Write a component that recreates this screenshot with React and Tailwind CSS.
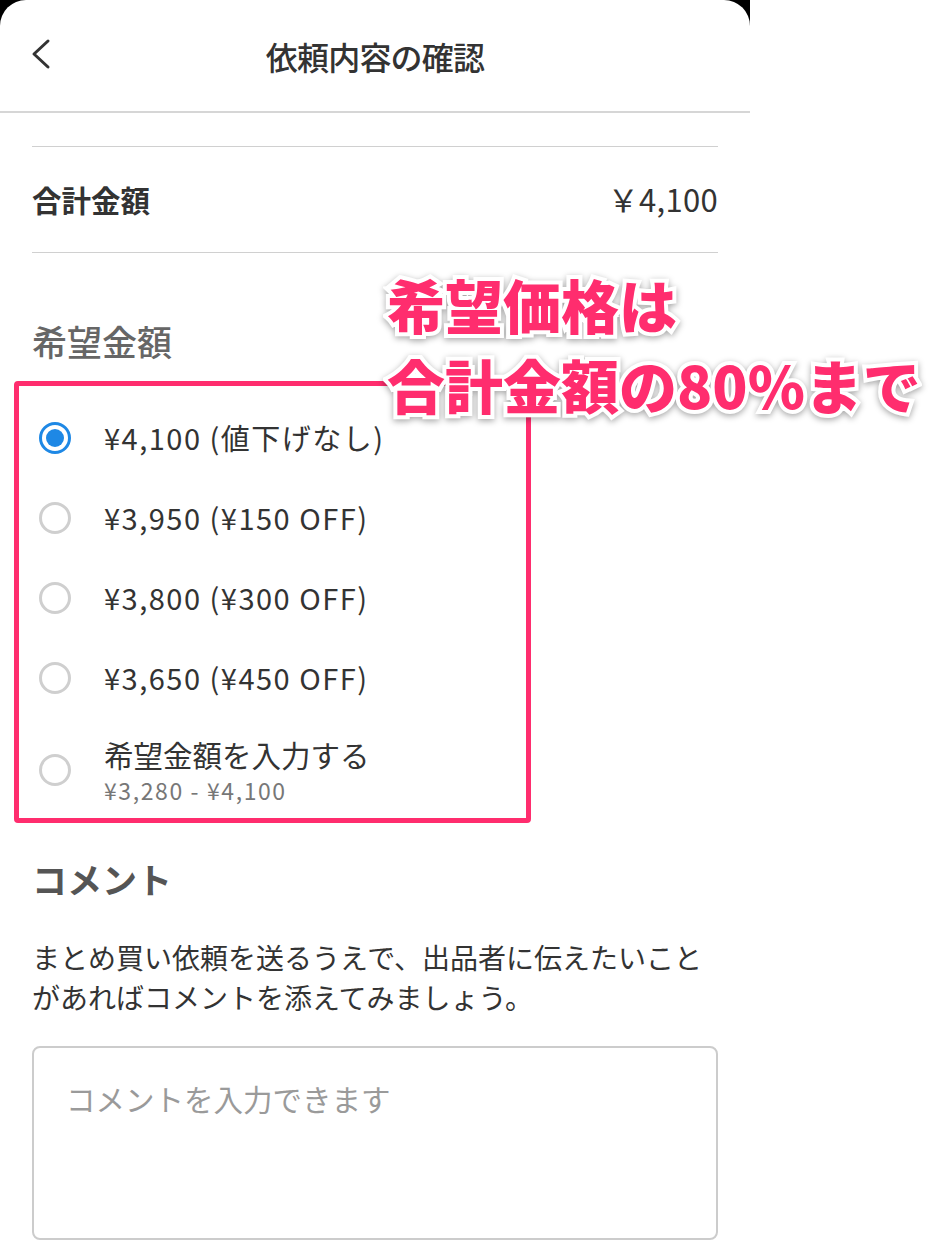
import React from 'react';

const options = [
  { label: '¥4,100 (値下げなし)', checked: true },
  { label: '¥3,950 (¥150 OFF)' },
  { label: '¥3,800 (¥300 OFF)' },
  { label: '¥3,650 (¥450 OFF)' },
];

const Radio = ({ checked }) =>
  checked ? (
    <span className="flex h-[32px] w-[32px] shrink-0 items-center justify-center rounded-full border-[3px] border-[#1e88e5] bg-white">
      <span className="h-[18px] w-[18px] rounded-full bg-[#1e88e5]" />
    </span>
  ) : (
    <span className="h-[32px] w-[32px] shrink-0 rounded-full border-[3px] border-[#cfcfcf] bg-white" />
  );

const App = () => {
  return (
    <div className="relative min-h-[1254px] w-[940px] overflow-hidden bg-white font-['Noto_Sans_CJK_JP',sans-serif] text-[#333]">
      <div className="w-[750px] bg-black">
        <div className="rounded-t-[26px] bg-white pb-[14px]">
          {/* Header */}
          <header className="relative flex h-[113px] items-center justify-center border-b-2 border-[#d6d6d6]">
            <svg className="absolute left-[27px] top-[36px]" width="28" height="36" viewBox="0 0 28 36" fill="none">
              <polyline points="21,5 7,18 21,31" stroke="#333" strokeWidth="3" strokeLinecap="round" strokeLinejoin="round" />
            </svg>
            <h1 className="text-[32px] font-medium leading-none tracking-tight text-[#333]">依頼内容の確認</h1>
          </header>

          <main className="px-[32px]">
            <div className="mt-[33px] border-t border-[#d0d0d0]" />
            <div className="flex h-[106px] items-center justify-between border-b border-[#d0d0d0]">
              <span className="text-[29.5px] font-bold">合計金額</span>
              <span className="text-[31px] tracking-[0.3px]">￥4,100</span>
            </div>

            <h2 className="mt-[68px] text-[35px] font-medium leading-[40px] text-[#666]">希望金額</h2>

            <div className="mt-[37px] flex flex-col">
              {options.map((o) => (
                <div key={o.label} className="flex h-[80px] items-center gap-[33px] pl-[7px]">
                  <Radio checked={o.checked} />
                  <span className="text-[29px] tracking-[1.5px]">{o.label}</span>
                </div>
              ))}
              <div className="flex h-[104px] items-center gap-[33px] pl-[7px]">
                <Radio />
                <div className="flex flex-col">
                  <span className="text-[29.5px] leading-[40px]">希望金額を入力する</span>
                  <span className="text-[23px] leading-[32px] tracking-[1.6px] text-[#777]">¥3,280 - ¥4,100</span>
                </div>
              </div>
            </div>

            <h2 className="mt-[35px] text-[35px] font-bold leading-[44px] text-[#555]">コメント</h2>
            <p className="mt-[36px] text-[28px] leading-[40px]">
              まとめ買い依頼を送るうえで、出品者に伝えたいこと<br />
              があればコメントを添えてみましょう。
            </p>

            <div className="mt-[29px] h-[194px] rounded-[8px] border-2 border-[#cccccc] px-[32px] pt-[32px]">
              <span className="text-[29.5px] leading-[36px] text-[#9a9a9a]">コメントを入力できます</span>
            </div>
          </main>
        </div>
      </div>

      {/* Annotation */}
      <div className="pointer-events-none absolute left-[14px] top-[381px] h-[442px] w-[517px] rounded-[4px] border-[5px] border-[#ff2d6e]" />
      <div className="pointer-events-none absolute left-[387px] top-[264px] flex flex-col text-[58px] font-black leading-[80px] text-[#ff2d6e] [-webkit-text-stroke:8px_white] [paint-order:stroke_fill] drop-shadow-[0_2px_3px_rgba(0,0,0,0.35)]">
        <span>希望価格は</span>
        <span>合計金額の80%まで</span>
      </div>
    </div>
  );
};

export default App;
